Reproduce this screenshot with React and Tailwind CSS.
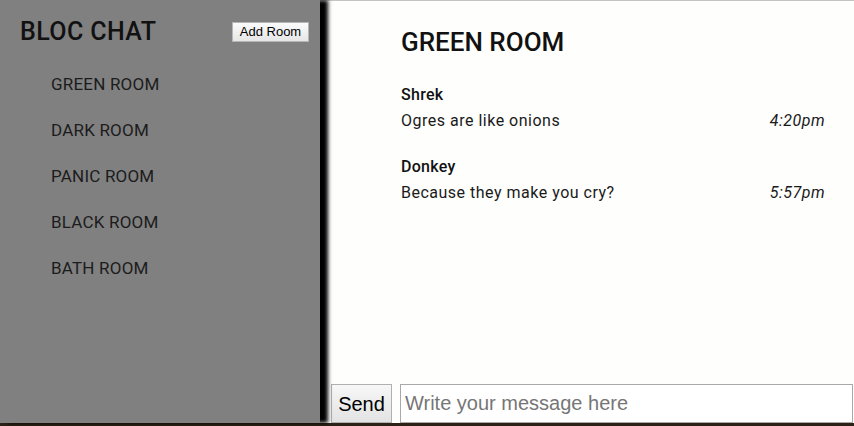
import { useState } from "react";

const ROOMS = ["GREEN ROOM", "DARK ROOM", "PANIC ROOM", "BLACK ROOM", "BATH ROOM"];

const MESSAGES = [
  { id: 1, user: "Shrek", text: "Ogres are like onions", time: "4:20pm" },
  { id: 2, user: "Donkey", text: "Because they make you cry?", time: "5:57pm" },
];

export default function App() {
  const [draft, setDraft] = useState("");

  return (
    <div className="h-[426px] w-[854px] overflow-hidden bg-[#2b2116] font-['Roboto',sans-serif]">
      <div className="flex h-[423px]">
        <aside className="relative z-10 flex w-[320px] shrink-0 flex-col bg-[#808080] shadow-[8px_0_4px_#000]">
          <div className="flex items-start justify-between pl-[20px] pr-[11px] pt-[17px]">
            <h1 className="text-[25px] font-medium leading-[30px] tracking-[0.4px] text-[#111]">BLOC CHAT</h1>
            <button className="mt-[5px] h-[20px] w-[77px] border border-[#b5b5b5] bg-gradient-to-b from-[#fbfbfb] to-[#e6e6e6] font-['Liberation_Sans',sans-serif] text-[13px] leading-[18px] text-black">
              Add Room
            </button>
          </div>
          <ul className="mt-[26px] flex flex-col gap-[24px] pl-[51px]">
            {ROOMS.map((r) => (
              <li key={r} className="text-[17px] leading-[22px] tracking-[0.2px] text-[#1c1c1c]">
                {r}
              </li>
            ))}
          </ul>
        </aside>

        <main className="flex flex-1 flex-col border-t border-[#c4c4c4] bg-[#fefefd]">
          <div className="flex-1 pl-[81px] pr-[29px] pt-[24px]">
            <h2 className="text-[26px] font-medium leading-[34px] text-[#111]">GREEN ROOM</h2>
            <div className="mt-[24px] flex flex-col gap-[20px]">
              {MESSAGES.map((m) => (
                <div key={m.id}>
                  <div className="text-[16px] font-medium leading-[24px] tracking-[0.3px] text-[#111]">{m.user}</div>
                  <div className="flex justify-between text-[16px] leading-[28px] tracking-[0.5px] text-[#1a1a1a]">
                    <span>{m.text}</span>
                    <span className="italic">{m.time}</span>
                  </div>
                </div>
              ))}
            </div>
          </div>
          <form
            className="flex gap-[8px] pl-[11px] pr-px"
            onSubmit={(e) => {
              e.preventDefault();
              setDraft("");
            }}
          >
            <button className="h-[39px] w-[61px] border border-[#b0b0b0] bg-gradient-to-b from-[#f7f7f7] to-[#e3e3e3] font-['Liberation_Sans',sans-serif] text-[20px] text-black">
              Send
            </button>
            <input
              value={draft}
              onChange={(e) => setDraft(e.target.value)}
              placeholder="Write your message here"
              className="h-[39px] flex-1 border border-[#a9a9a9] bg-white px-[4px] font-['Liberation_Sans',sans-serif] text-[20px] text-black outline-none placeholder:text-[#767676]"
            />
          </form>
        </main>
      </div>
    </div>
  );
}
